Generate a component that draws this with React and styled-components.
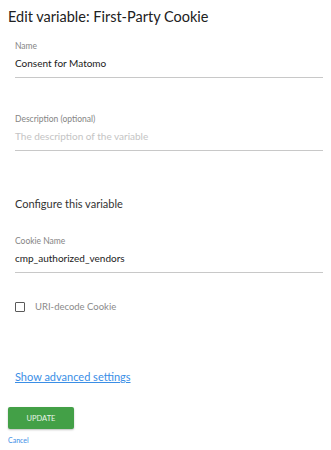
import styled, { createGlobalStyle } from 'styled-components'

const GlobalStyle = createGlobalStyle`
  body {
    margin: 0;
    background: #fff;
    font-family: Lato, "Noto Sans", sans-serif;
    color: #212121;
  }
`

const Page = styled.div`
  padding: 8px 8px 0 8px;
`

const Title = styled.h2`
  margin: 0;
  font-size: 14.5px;
  font-weight: 400;
  line-height: 18px;
  color: #212121;
`

const Form = styled.div`
  padding: 0 0 0 7px;
`

const Field = styled.div`
  margin-top: ${p => p.$top}px;
`

const Label = styled.div`
  font-size: 8.5px;
  line-height: 10px;
  color: #858585;
`

const Input = styled.div`
  margin-top: 4px;
  font-size: 10px;
  line-height: 16px;
  padding-bottom: 6px;
  border-bottom: 1px solid #c8c8c8;
  color: ${p => (p.$placeholder ? '#c4c4c4' : '#212121')};
`

const Section = styled.div`
  margin-top: 45px;
  font-size: 11px;
  line-height: 16px;
  color: #333;
`

const CheckRow = styled.label`
  display: flex;
  align-items: center;
  gap: 10px;
  margin-top: 28px;
  font-size: 9.5px;
  color: #8a8a8a;
`

const Box = styled.span`
  width: 8px;
  height: 8px;
  border: 1.5px solid #5a5a5a;
  border-radius: 1px;
`

const AdvancedLink = styled.a`
  display: block;
  margin-top: 57px;
  font-size: 11px;
  line-height: 16px;
  color: #3a8ee6;
  text-decoration: underline;
`

const Actions = styled.div`
  margin-top: 22px;
`

const UpdateButton = styled.button`
  display: block;
  width: 66px;
  height: 22px;
  border: none;
  border-radius: 2px;
  background: #43a047;
  color: #e8f5e9;
  font-family: inherit;
  font-size: 7.5px;
  box-shadow: 0 1px 2px rgba(0, 0, 0, 0.25);
`

const CancelLink = styled.a`
  display: block;
  margin-top: 7px;
  font-size: 7px;
  color: #3a8ee6;
  text-decoration: underline;
`

export default function App() {
  return (
    <>
      <GlobalStyle />
      <Page>
        <Title>Edit variable: First-Party Cookie</Title>
        <Form>
          <Field $top={15}>
            <Label>Name</Label>
            <Input>Consent for Matomo</Input>
          </Field>
          <Field $top={36}>
            <Label>Description (optional)</Label>
            <Input $placeholder>The description of the variable</Input>
          </Field>
          <Section>Configure this variable</Section>
          <Field $top={24}>
            <Label>Cookie Name</Label>
            <Input>cmp_authorized_vendors</Input>
          </Field>
          <CheckRow>
            <Box />
            URI-decode Cookie
          </CheckRow>
          <AdvancedLink href="#">Show advanced settings</AdvancedLink>
        </Form>
        <Actions>
          <UpdateButton>UPDATE</UpdateButton>
          <CancelLink href="#">Cancel</CancelLink>
        </Actions>
      </Page>
    </>
  )
}
